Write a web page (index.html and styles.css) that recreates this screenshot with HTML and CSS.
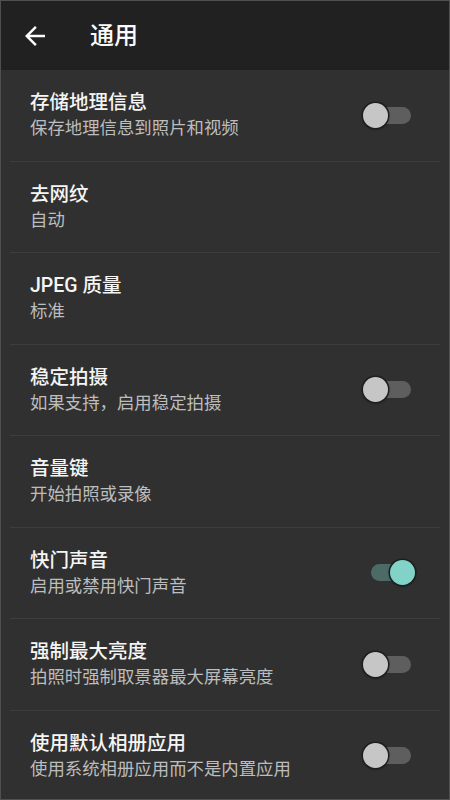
FILE: index.html
```html
<!DOCTYPE html>
<html lang="zh-CN">
<head>
<meta charset="utf-8">
<title>通用</title>
<link rel="stylesheet" href="styles.css">
</head>
<body>
<div class="frame">
  <header class="appbar">
    <span class="back">
      <svg viewBox="0 0 24 24" width="30" height="30"><path fill="#fafafa" d="M20 11H7.83l5.59-5.59L12 4l-8 8 8 8 1.41-1.41L7.83 13H20v-2z"/></svg>
    </span>
    <h1 class="title">通用</h1>
  </header>
  <main class="list">
    <div class="row">
      <div class="text"><div class="t">存储地理信息</div><div class="s">保存地理信息到照片和视频</div></div>
      <span class="switch"><span class="track"></span><span class="thumb"></span></span>
    </div>
    <div class="row">
      <div class="text"><div class="t">去网纹</div><div class="s">自动</div></div>
    </div>
    <div class="row">
      <div class="text"><div class="t">JPEG 质量</div><div class="s">标准</div></div>
    </div>
    <div class="row">
      <div class="text"><div class="t">稳定拍摄</div><div class="s">如果支持，启用稳定拍摄</div></div>
      <span class="switch"><span class="track"></span><span class="thumb"></span></span>
    </div>
    <div class="row">
      <div class="text"><div class="t">音量键</div><div class="s">开始拍照或录像</div></div>
    </div>
    <div class="row">
      <div class="text"><div class="t">快门声音</div><div class="s">启用或禁用快门声音</div></div>
      <span class="switch on"><span class="track"></span><span class="thumb"></span></span>
    </div>
    <div class="row">
      <div class="text"><div class="t">强制最大亮度</div><div class="s">拍照时强制取景器最大屏幕亮度</div></div>
      <span class="switch"><span class="track"></span><span class="thumb"></span></span>
    </div>
    <div class="row">
      <div class="text"><div class="t">使用默认相册应用</div><div class="s">使用系统相册应用而不是内置应用</div></div>
      <span class="switch"><span class="track"></span><span class="thumb"></span></span>
    </div>
  </main>
</div>
</body>
</html>
```
FILE: styles.css
```css
* { box-sizing: border-box; }
html, body {
  margin: 0;
  padding: 0;
  background: #303030;
}
body {
  font-family: Roboto, "Noto Sans CJK SC", "Noto Sans", sans-serif;
}
.frame {
  width: 450px;
  height: 800px;
  overflow: hidden;
  border: 1px solid #505050;
  background: #303030;
}
.appbar {
  height: 69px;
  background: #212121;
  display: flex;
  align-items: center;
  padding-left: 19px;
}
.back {
  width: 30px;
  height: 30px;
  display: flex;
}
.title {
  margin: 0 0 0 40px;
  font-size: 24px;
  font-weight: 500;
  color: #fafafa;
  line-height: 30px;
}
.list {
  display: flex;
  flex-direction: column;
}
.row {
  margin: 0 9px;
  padding: 19px 24px 19.5px 20px;
  border-bottom: 1.5px solid #3d3d3d;
  display: flex;
  align-items: center;
}
.text {
  flex: 1;
}
.t {
  font-size: 19.5px;
  line-height: 27px;
  font-weight: 500;
  color: #f5f5f5;
}
.s {
  font-size: 17.4px;
  line-height: 25px;
  color: #bdbdbd;
}
.switch {
  position: relative;
  width: 53px;
  height: 26px;
  flex: none;
}
.track {
  position: absolute;
  left: 4px;
  right: 5px;
  top: 4.5px;
  height: 17px;
  border-radius: 9px;
  background: #5e5e5e;
}
.thumb {
  position: absolute;
  left: 0;
  top: 0.5px;
  width: 25px;
  height: 25px;
  border-radius: 50%;
  background: #c6c6c6;
  box-shadow: 0 0 0 1.5px #1e1e1e, 0 1px 3px rgba(0,0,0,0.5);
}
.switch.on .track {
  left: 8px;
  right: 3px;
  background: #4c6a66;
}
.switch.on .thumb {
  left: 27px;
  background: #80d3c6;
}
```
